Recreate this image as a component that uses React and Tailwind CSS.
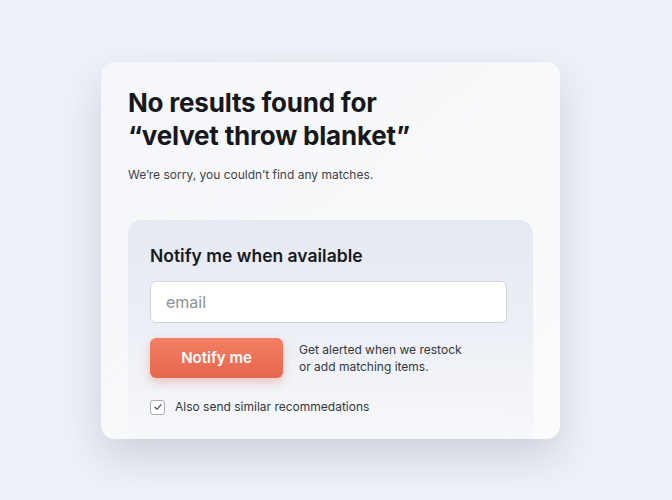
import React from 'react';

const App = () => {
  return (
    <div
      className="min-h-screen w-full bg-[#eef1f7] pl-[101px] pt-[62px]"
      style={{ fontFamily: 'Inter, "Noto Sans", sans-serif' }}
    >
      {/* Card */}
      <div className="h-[377px] w-[459px] overflow-hidden rounded-[14px] bg-gradient-to-br from-[#f4f6f9] to-[#fbfbfc] shadow-[0_18px_40px_rgba(120,130,155,0.28)]">
        <div className="px-[27px] pt-[24px]">
          <h1 className="text-[26px] font-bold leading-[33px] tracking-[-0.2px] text-[#16181c]">
            No results found for
            <br />
            “velvet throw blanket”
          </h1>
          <p className="mt-[14px] text-[12px] leading-[18px] text-[#3f434a]">
            We’re sorry, you couldn’t find any matches.
          </p>
        </div>

        {/* Notify panel */}
        <div className="mx-[27px] mt-[36px] h-[219px] rounded-t-[14px] bg-gradient-to-b from-[#e5e9f2] via-[#eceff5] to-[#f7f8fa] px-[22px] pt-[24px]">
          <h2 className="text-[17.5px] font-semibold leading-[24px] text-[#17191d]">
            Notify me when available
          </h2>
          <input
            type="text"
            placeholder="email"
            className="mt-[13px] block h-[42px] w-[357px] rounded-[6px] border border-[#cfd3da] bg-white px-[15px] text-[16px] text-[#222] outline-none placeholder:text-[#8d9199]"
          />
          <div className="mt-[15px] flex items-center gap-[16px]">
            <button className="h-[40px] w-[133px] rounded-[6px] bg-gradient-to-b from-[#f37f66] to-[#e8654e] text-[15px] font-semibold text-white shadow-[0_4px_10px_rgba(220,100,80,0.35)]">
              Notify me
            </button>
            <p className="text-[12px] leading-[17px] text-[#34373d]">
              Get alerted when we restock
              <br />
              or add matching items.
            </p>
          </div>
          <label className="mt-[21px] flex items-center gap-[10px]">
            <span className="flex h-[15px] w-[15px] items-center justify-center rounded-[3px] border border-[#a9aeb6] bg-white">
              <svg width="10" height="10" viewBox="0 0 10 10" fill="none">
                <path d="M2 5.2 L4.1 7.2 L8 2.8" stroke="#5b6068" strokeWidth="1.3" strokeLinecap="round" strokeLinejoin="round" />
              </svg>
            </span>
            <span className="text-[12px] leading-[16px] text-[#34373d]">Also send similar recommedations</span>
          </label>
        </div>
      </div>
    </div>
  );
};

export default App;
